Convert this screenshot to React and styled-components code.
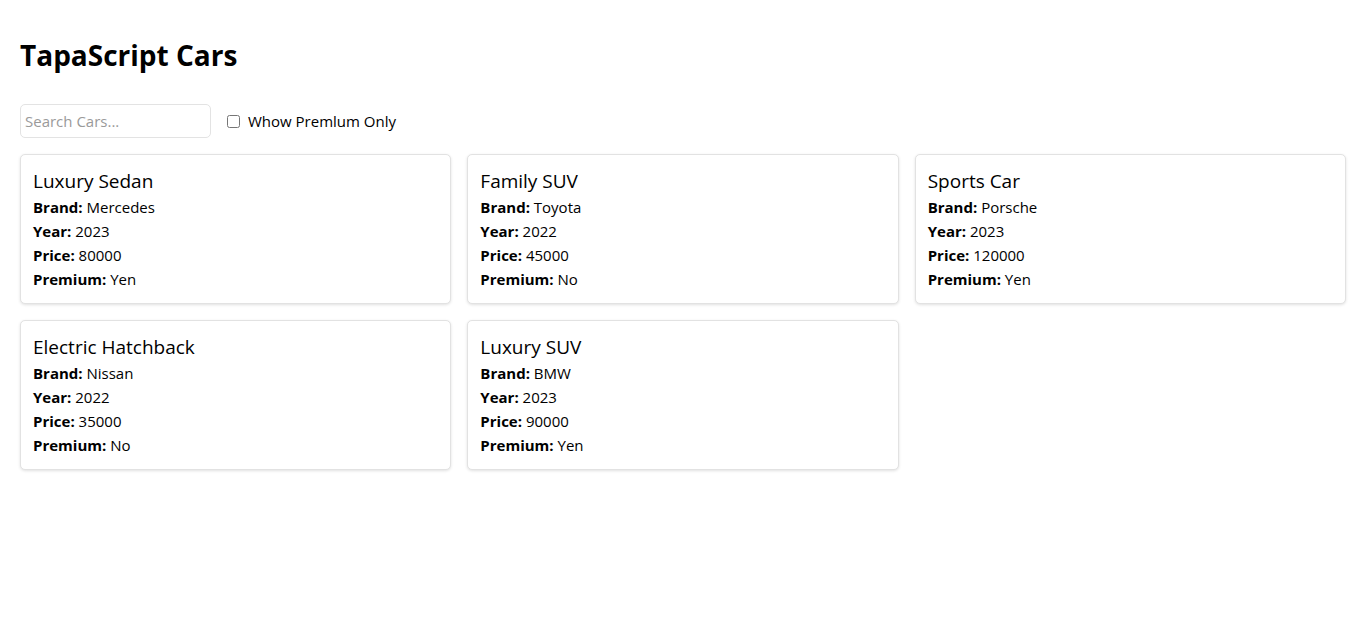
import React, { useState } from "react";
import styled, { createGlobalStyle } from "styled-components";

const GlobalStyle = createGlobalStyle`
  html, body { margin: 0; padding: 0; background: #fff; }
  body { font-family: "Open Sans", "Noto Sans", sans-serif; color: #000; }
  * { box-sizing: border-box; }
`;

const Page = styled.div`
  padding: 20px;
`;

const Heading = styled.h1`
  margin: 16px 0 0;
  font-size: 28px;
  font-weight: 700;
  line-height: 38px;
`;

const Toolbar = styled.div`
  display: flex;
  align-items: center;
  gap: 16px;
  margin: 30px 0 16px;
`;

const SearchInput = styled.input`
  width: 191px;
  height: 34px;
  padding: 4px;
  border: 1px solid #e3e3e3;
  border-radius: 5px;
  font-family: inherit;
  font-size: 15px;
  outline: none;
  &::placeholder { color: #9a9a9a; }
`;

const CheckLabel = styled.label`
  display: flex;
  align-items: center;
  gap: 8px;
  font-size: 15px;
`;

const Checkbox = styled.input`
  margin: 0;
  width: 13px;
  height: 13px;
`;

const Grid = styled.div`
  display: grid;
  grid-template-columns: repeat(3, 1fr);
  gap: 16px;
`;

const Card = styled.div`
  border: 1px solid #e2e2e2;
  border-radius: 5px;
  padding: 12px;
  box-shadow: 0 1px 3px rgba(0, 0, 0, 0.12);
  background: #fff;
`;

const CardTitle = styled.h3`
  margin: 0;
  font-size: 19px;
  font-weight: 400;
  line-height: 28px;
`;

const Field = styled.p`
  margin: 0;
  font-size: 15px;
  line-height: 24px;
  b { font-weight: 700; }
`;

const cars = [
  { name: "Luxury Sedan", brand: "Mercedes", year: 2023, price: 80000, premium: "Yen" },
  { name: "Family SUV", brand: "Toyota", year: 2022, price: 45000, premium: "No" },
  { name: "Sports Car", brand: "Porsche", year: 2023, price: 120000, premium: "Yen" },
  { name: "Electric Hatchback", brand: "Nissan", year: 2022, price: 35000, premium: "No" },
  { name: "Luxury SUV", brand: "BMW", year: 2023, price: 90000, premium: "Yen" },
];

export default function App() {
  const [query, setQuery] = useState("");
  const [premiumOnly, setPremiumOnly] = useState(false);
  const shown = cars.filter(
    (c) =>
      c.name.toLowerCase().includes(query.toLowerCase()) &&
      (!premiumOnly || c.premium === "Yen")
  );
  return (
    <Page>
      <GlobalStyle />
      <Heading>TapaScript Cars</Heading>
      <Toolbar>
        <SearchInput
          placeholder="Search Cars..."
          value={query}
          onChange={(e) => setQuery(e.target.value)}
        />
        <CheckLabel>
          <Checkbox
            type="checkbox"
            checked={premiumOnly}
            onChange={(e) => setPremiumOnly(e.target.checked)}
          />
          Whow Premlum Only
        </CheckLabel>
      </Toolbar>
      <Grid>
        {shown.map((c) => (
          <Card key={c.name}>
            <CardTitle>{c.name}</CardTitle>
            <Field><b>Brand:</b> {c.brand}</Field>
            <Field><b>Year:</b> {c.year}</Field>
            <Field><b>Price:</b> {c.price}</Field>
            <Field><b>Premium:</b> {c.premium}</Field>
          </Card>
        ))}
      </Grid>
    </Page>
  );
}
